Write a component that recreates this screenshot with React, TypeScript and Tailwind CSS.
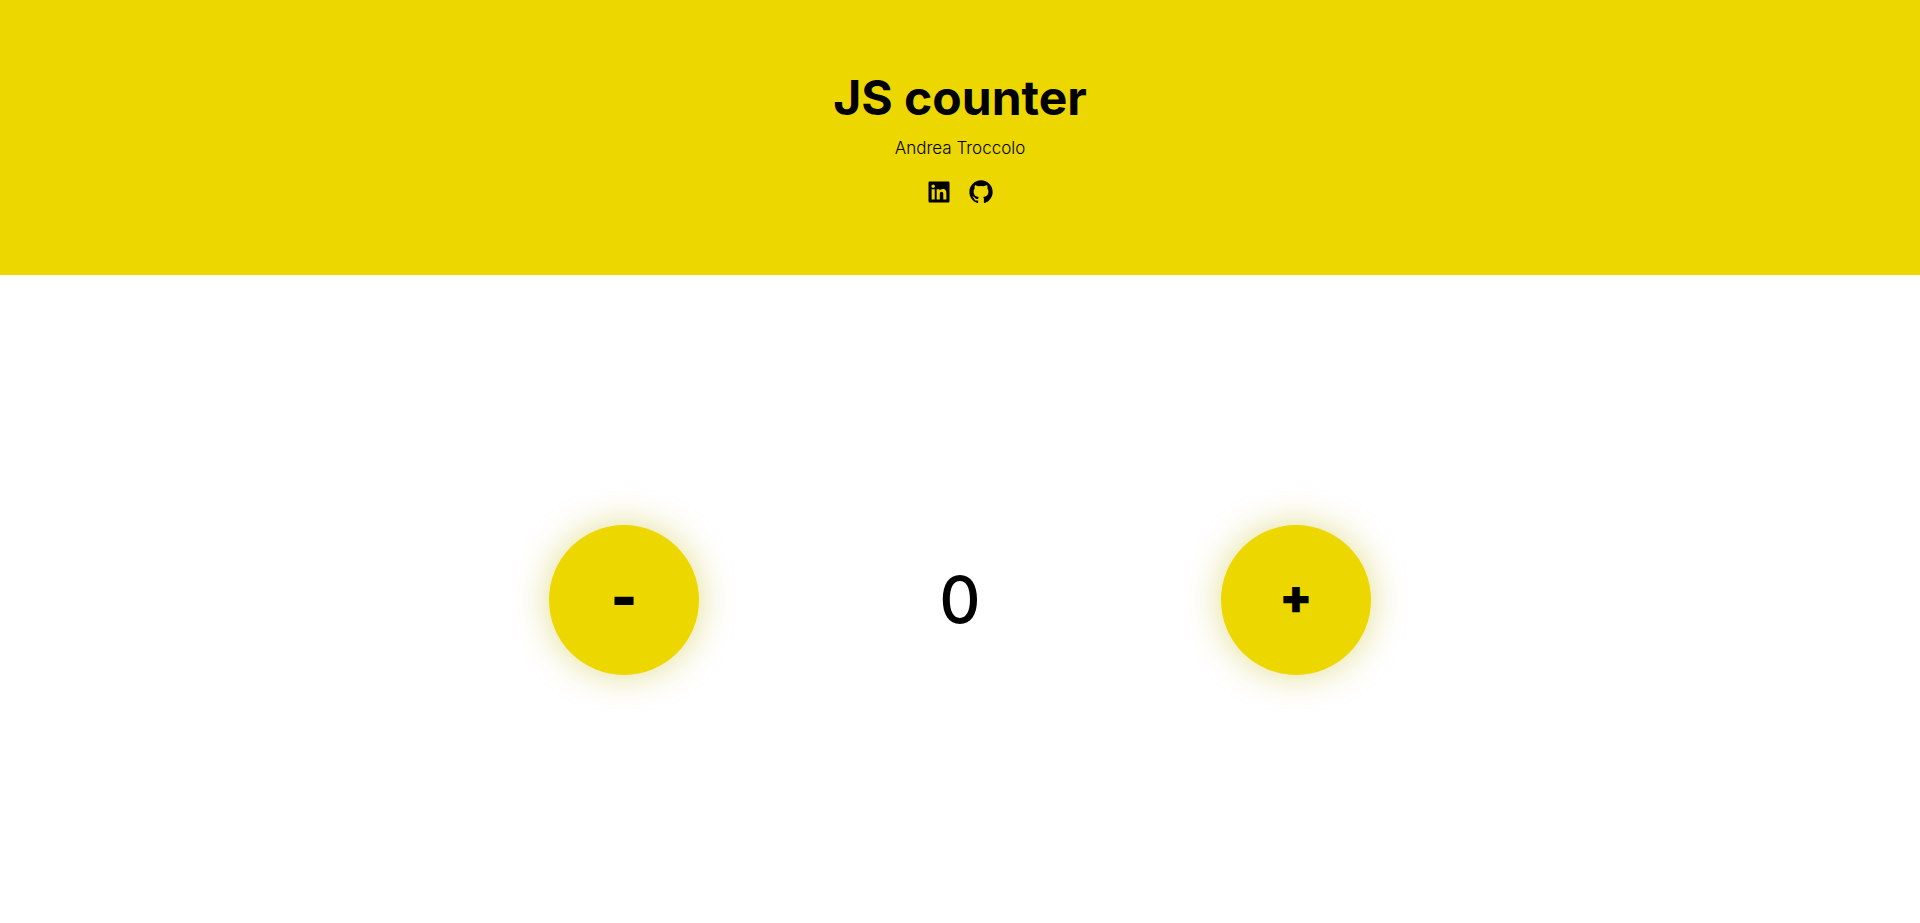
import { useState } from "react";
import { BiLogoGithub, BiLogoLinkedinSquare } from "react-icons/bi";

const roundButton =
  "flex size-[150px] cursor-pointer items-center justify-center rounded-full bg-[#edd700] pb-1.5 shadow-[0_0_36px_#beb40073] leading-[48px] font-black";

export default function App() {
  const [count, setCount] = useState(0);

  return (
    <div className="flex min-h-screen flex-col bg-white font-['Inter',sans-serif] text-black">
      <header className="flex flex-col items-center bg-[#edd700] pt-16 pb-[69px]">
        <h1 className="text-5xl leading-[68px] font-bold">JS counter</h1>
        <p className="text-[17px] leading-8 font-light">Andrea Troccolo</p>
        <nav className="mt-[14px] flex gap-[14px]">
          <a href="https://www.linkedin.com" aria-label="LinkedIn">
            <BiLogoLinkedinSquare className="size-7" />
          </a>
          <a href="https://github.com" aria-label="GitHub">
            <BiLogoGithub className="size-7" />
          </a>
        </nav>
      </header>
      <main className="flex flex-1 items-center justify-center pt-0.5">
        <div className="grid w-full max-w-[1008px] grid-cols-3 items-center justify-items-center">
          <button type="button" aria-label="Decrease" className={`${roundButton} text-[56px]`} onClick={() => setCount(count - 1)}>
            -
          </button>
          <output className="text-[64px] leading-none font-medium">{count}</output>
          <button type="button" aria-label="Increase" className={`${roundButton} text-[48px]`} onClick={() => setCount(count + 1)}>
            +
          </button>
        </div>
      </main>
    </div>
  );
}
